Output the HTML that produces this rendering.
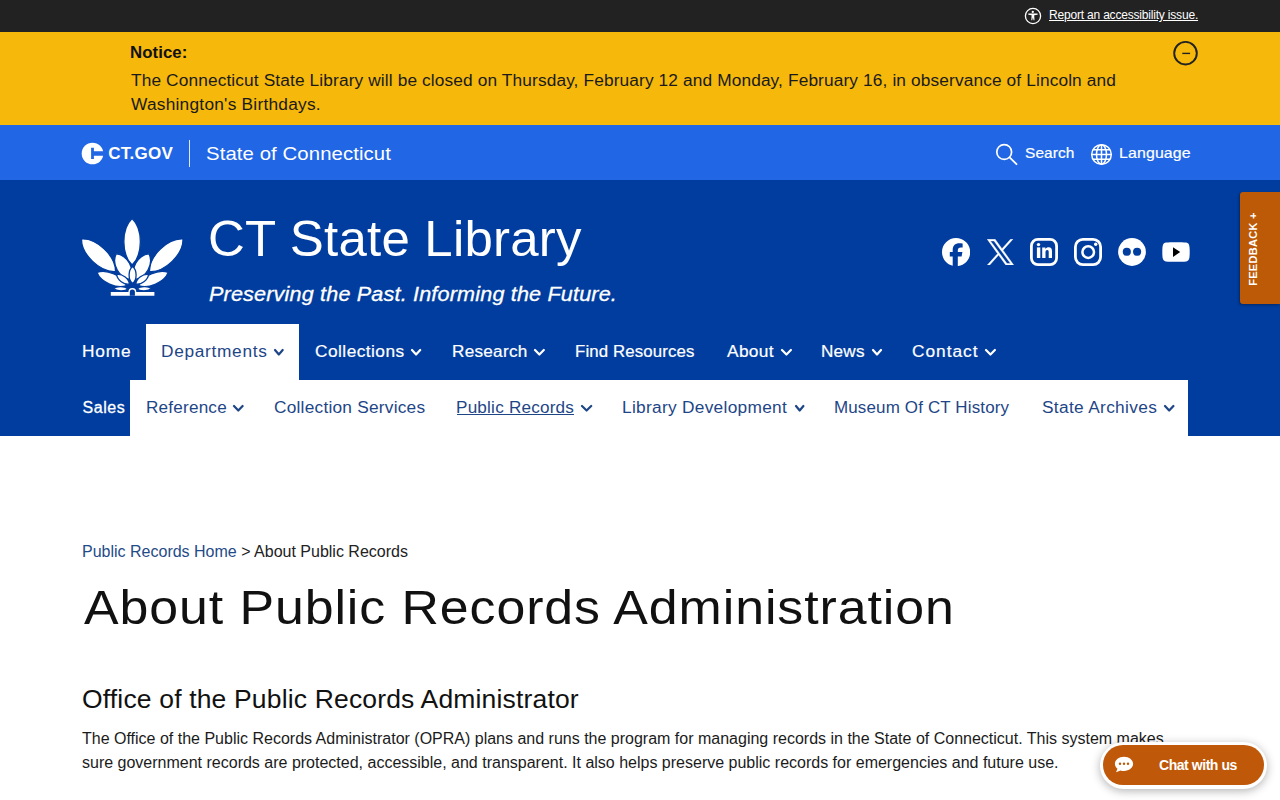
<!DOCTYPE html>
<html><head><meta charset="utf-8">
<style>
html,body{margin:0;padding:0;width:1280px;height:800px;overflow:hidden;background:#fff;}
body{position:relative;font-family:"Liberation Sans",sans-serif;}
.t{position:absolute;white-space:pre;}
.ic{position:absolute;display:block;}
.band{position:absolute;left:0;width:1280px;}
</style></head><body>
<div class="band" style="top:0;height:32px;background:#222222"></div>
<div class="band" style="top:32px;height:93px;background:#f5b80b"></div>
<div class="band" style="top:125px;height:55px;background:#2166e5"></div>
<div class="band" style="top:180px;height:256px;background:#003d9e"></div>

<!-- top bar -->
<svg class="ic" style="left:1024px;top:7px" width="18" height="18" viewBox="0 0 18 18">
 <circle cx="9" cy="9" r="7.6" fill="none" stroke="#fff" stroke-width="1.3"/>
 <circle cx="8.8" cy="4.9" r="1.15" fill="#fff"/>
 <path d="M4.3 6.6 L13.6 6.6 L13.6 7.7 L10.2 8.3 L10.5 13.2 L9.6 13.2 L8.9 10.6 L8.2 13.2 L7.3 13.2 L7.6 8.3 L4.3 7.7Z" fill="#fff"/>
</svg>
<div class="t" style="left:1049px;top:9px;font-size:12px;line-height:12px;letter-spacing:-0.19px;color:#fff;text-decoration:underline;text-underline-offset:1px">Report an accessibility issue.</div>

<!-- notice -->
<div class="t" style="left:129.9px;top:45.0px;font-size:16px;line-height:16px;letter-spacing:0.063px;color:#111;transform:scaleX(1.05);transform-origin:0 0;font-weight:bold;">Notice:</div>
<div class="t" style="left:131.0px;top:73.0px;font-size:16px;line-height:16px;letter-spacing:0.119px;color:#1a1a1a;transform:scaleX(1.08);transform-origin:0 0;">The Connecticut State Library will be closed on Thursday, February 12 and Monday, February 16, in observance of Lincoln and</div>
<div class="t" style="left:131.0px;top:97.0px;font-size:16px;line-height:16px;letter-spacing:0.231px;color:#1a1a1a;transform:scaleX(1.08);transform-origin:0 0;">Washington&#39;s Birthdays.</div>
<svg class="ic" style="left:1172px;top:40px" width="27" height="27" viewBox="0 0 27 27">
 <circle cx="13.5" cy="13.2" r="11.3" fill="none" stroke="#222" stroke-width="1.9"/>
 <path d="M10.3 13.4H18.1" stroke="#222" stroke-width="1.4"/>
</svg>

<!-- ct.gov bar -->
<svg class="ic" style="left:81px;top:142px" width="23" height="23" viewBox="0 0 23 23">
 <circle cx="11.5" cy="11.5" r="10.8" fill="#fff"/>
 <path d="M10.1 5.8H12.9V9.2H23V13.8H12.9V17.1H10.1Z" fill="#2166e5"/>
</svg>
<div class="t" style="left:108.2px;top:145.3px;font-size:17px;line-height:17px;letter-spacing:0.28px;color:#fff;font-weight:bold;">CT.GOV</div>
<div class="ic" style="left:189px;top:140px;width:1px;height:27px;background:rgba(255,255,255,0.85)"></div>
<div class="t" style="left:205.5px;top:144.0px;font-size:19px;line-height:19px;letter-spacing:0.089px;color:#fff;transform:scaleX(1.07);transform-origin:0 0;">State of Connecticut</div>
<svg class="ic" style="left:994px;top:142px" width="25" height="25" viewBox="0 0 25 25">
 <circle cx="10.2" cy="10" r="7.4" fill="none" stroke="#fff" stroke-width="1.7"/>
 <path d="M15.6 15.4L22.5 22.2" stroke="#fff" stroke-width="1.8" stroke-linecap="round"/>
</svg>
<div class="t" style="left:1025.4px;top:145.0px;font-size:15px;line-height:15px;letter-spacing:0.082px;color:#fff;transform:scaleX(1.03);transform-origin:0 0;-webkit-text-stroke:0.2px #fff;">Search</div>
<svg class="ic" style="left:1090px;top:143px" width="23" height="23" viewBox="0 0 23 23">
 <g fill="none" stroke="#fff" stroke-width="1.5">
 <circle cx="11.5" cy="11.5" r="9.8"/>
 <ellipse cx="11.5" cy="11.5" rx="5" ry="9.8"/>
 <path d="M11.5 1.7V21.3M1.7 11.5H21.3M3 6.8H20M3 16.2H20"/>
 </g>
</svg>
<div class="t" style="left:1118.9px;top:145.0px;font-size:15px;line-height:15px;letter-spacing:0.121px;color:#fff;transform:scaleX(1.06);transform-origin:0 0;-webkit-text-stroke:0.2px #fff;">Language</div>

<!-- header -->
<svg class="ic" style="left:80px;top:215px" width="105" height="85" viewBox="0 0 105 85">
 <g fill="#fff" stroke="#003d9e" stroke-width="1.3" stroke-linejoin="round"><path d="M52.10 3.50C41.10 13.73 41.10 39.77 52.10 50.00C63.10 39.77 63.10 13.73 52.10 3.50Z"/><path d="M1.50 24.00C1.15 39.34 20.19 57.54 35.50 56.50C35.85 41.16 16.81 22.96 1.50 24.00Z"/><path d="M103.00 24.00C87.74 23.02 68.98 41.22 69.50 56.50C84.76 57.48 103.52 39.28 103.00 24.00Z"/><path d="M36.20 38.80C31.19 48.99 39.20 63.38 50.50 64.50C55.51 54.31 47.50 39.92 36.20 38.80Z"/><path d="M69.00 38.80C57.70 39.92 49.69 54.31 54.70 64.50C66.00 63.38 74.01 48.99 69.00 38.80Z"/><path d="M17.00 57.50C20.53 67.07 37.05 74.35 46.50 70.50C42.97 60.93 26.45 53.65 17.00 57.50Z"/><path d="M88.20 57.50C78.75 53.65 62.23 60.93 58.70 70.50C68.15 74.35 84.67 67.07 88.20 57.50Z"/><path d="M36.70 59.50C37.10 64.79 44.21 70.11 49.40 69.00C49.00 63.71 41.89 58.39 36.70 59.50Z"/><path d="M68.50 59.50C63.31 58.39 56.20 63.71 55.80 69.00C60.99 70.11 68.10 64.79 68.50 59.50Z"/><path d="M52.60 51.50C47.93 55.24 47.93 64.76 52.60 68.50C57.27 64.76 57.27 55.24 52.60 51.50Z"/><path d="M33.50 73.50C36.59 76.41 44.71 76.69 48.00 74.00C44.91 71.09 36.79 70.81 33.50 73.50Z"/><path d="M71.50 73.50C68.21 70.81 60.09 71.09 57.00 74.00C60.29 76.69 68.41 76.41 71.50 73.50Z"/></g>
 <path d="M30.8 77H48.4A3.95 3.95 0 0 1 56.3 77H74.4V80.8H30.8Z" fill="#fff"/>
 <path d="M49.8 77A2.55 2.55 0 0 1 54.9 77V80.8H49.8Z" fill="#003d9e"/>
</svg>
<div class="t" style="left:207.7px;top:214.0px;font-size:50px;line-height:50px;letter-spacing:0.201px;color:#fff;transform:scaleX(1.02);transform-origin:0 0;">CT State Library</div>
<div class="t" style="left:208.6px;top:283.6px;font-size:20px;line-height:20px;letter-spacing:0.155px;color:#fff;transform:scaleX(1.08);transform-origin:0 0;font-style:italic;-webkit-text-stroke:0.3px #fff;">Preserving the Past. Informing the Future.</div>

<!-- social -->
<svg class="ic" style="left:942px;top:237.9px" width="28.2" height="28.2" viewBox="0 0 512 512"><path fill="#fff" d="M512 256C512 114.6 397.4 0 256 0S0 114.6 0 256C0 376 82.7 476.8 194.2 504.5V334.2H141.4V256h52.8V222.3c0-87.1 39.4-127.5 125-127.5c16.2 0 44.2 3.2 55.7 6.4V172c-6-.6-16.5-1-29.6-1c-42 0-58.2 15.9-58.2 57.2V256h83.6l-14.4 78.2H287V510.1C413.8 494.8 512 386.9 512 256h0z"/></svg>
<svg class="ic" style="left:986.5px;top:238.7px" width="27" height="26.4" viewBox="-10 -10 1220 1247" preserveAspectRatio="none"><path fill="#fff" stroke="#fff" stroke-width="20" d="M714.163 519.284L1160.89 0H1055.03L667.137 450.887L357.328 0H0L468.492 681.821L0 1226.37H105.866L515.491 750.218L842.672 1226.37H1200L714.137 519.284H714.163ZM569.165 687.828L521.697 619.934L144.011 79.6944H306.615L611.412 515.685L658.88 583.579L1055.08 1150.3H892.476L569.165 687.854V687.828Z"/></svg>
<svg class="ic" style="left:1030px;top:238px" width="28" height="28" viewBox="0 0 28 28">
 <rect x="1.4" y="1.4" width="25.2" height="25.2" rx="6.5" fill="none" stroke="#fff" stroke-width="2.8"/>
 <circle cx="8.5" cy="6.6" r="1.7" fill="#fff"/>
 <rect x="6.9" y="9.4" width="3.4" height="10.6" fill="#fff"/>
 <path d="M12.2 9.4H15.4V10.9C16.1 9.8 17.3 9.2 18.7 9.2C21 9.2 22 10.7 22 13.2V20H18.7V13.9C18.7 12.7 18.3 12 17.3 12C16.2 12 15.5 12.8 15.5 14.1V20H12.2Z" fill="#fff"/>
</svg>
<svg class="ic" style="left:1074px;top:238px" width="28" height="28" viewBox="0 0 28 28">
 <rect x="1.4" y="1.4" width="25.2" height="25.2" rx="7.5" fill="none" stroke="#fff" stroke-width="2.8"/>
 <circle cx="14.2" cy="14.1" r="5.8" fill="none" stroke="#fff" stroke-width="2.5"/>
 <circle cx="21.7" cy="6.3" r="1.7" fill="#fff"/>
</svg>
<svg class="ic" style="left:1118px;top:238px" width="28" height="28" viewBox="0 0 28 28">
 <circle cx="14" cy="14" r="13.9" fill="#fff"/>
 <circle cx="8.8" cy="13.8" r="4.05" fill="#003d9e"/>
 <circle cx="19.1" cy="13.8" r="4.05" fill="#003d9e"/>
</svg>
<svg class="ic" style="left:1162px;top:241.8px" width="28" height="20" viewBox="0 0 28 20">
 <path d="M0.3 10C0.3 3 1 1 4 0.6C8 0.1 20 0.1 24 0.6C27 1 27.7 3 27.7 10C27.7 17 27 19 24 19.4C20 19.9 8 19.9 4 19.4C1 19 0.3 17 0.3 10Z" fill="#fff"/>
 <path d="M11 5.3L18.2 10L11 15Z" fill="#000"/>
</svg>

<!-- nav row 1 -->
<div class="ic" style="left:146px;top:324px;width:153px;height:60px;background:#fff"></div>
<div class="t" style="left:81.7px;top:344.2px;font-size:16px;line-height:16px;letter-spacing:0.793px;color:#fff;transform:scaleX(1.08);transform-origin:0 0;-webkit-text-stroke:0.2px #fff;">Home</div>
<div class="t" style="left:161.3px;top:344.2px;font-size:16px;line-height:16px;letter-spacing:0.639px;color:#1e4687;transform:scaleX(1.08);transform-origin:0 0;">Departments</div>
<svg class="ic" style="left:273.4px;top:347.75px" width="11.700000000000045" height="8.5" viewBox="-1 -1 11.700000000000045 8.5"><path d="M1 1L4.850000000000023 5.5L8.700000000000045 1" fill="none" stroke="#1e4687" stroke-width="2.2" stroke-linecap="round" stroke-linejoin="round"/></svg>
<div class="t" style="left:314.5px;top:344.2px;font-size:16px;line-height:16px;letter-spacing:0.43px;color:#fff;transform:scaleX(1.08);transform-origin:0 0;-webkit-text-stroke:0.2px #fff;">Collections</div>
<svg class="ic" style="left:409.9px;top:347.75px" width="12.200000000000045" height="8.5" viewBox="-1 -1 12.200000000000045 8.5"><path d="M1 1L5.100000000000023 5.5L9.200000000000045 1" fill="none" stroke="#fff" stroke-width="2.2" stroke-linecap="round" stroke-linejoin="round"/></svg>
<div class="t" style="left:451.5px;top:344.2px;font-size:16px;line-height:16px;letter-spacing:0.268px;color:#fff;transform:scaleX(1.07);transform-origin:0 0;-webkit-text-stroke:0.2px #fff;">Research</div>
<svg class="ic" style="left:532.8px;top:347.75px" width="12.800000000000068" height="8.5" viewBox="-1 -1 12.800000000000068 8.5"><path d="M1 1L5.400000000000034 5.5L9.800000000000068 1" fill="none" stroke="#fff" stroke-width="2.2" stroke-linecap="round" stroke-linejoin="round"/></svg>
<div class="t" style="left:574.7px;top:344.2px;font-size:16px;line-height:16px;letter-spacing:0.121px;color:#fff;transform:scaleX(1.05);transform-origin:0 0;-webkit-text-stroke:0.2px #fff;">Find Resources</div>
<div class="t" style="left:727.1px;top:344.2px;font-size:16px;line-height:16px;letter-spacing:0.333px;color:#fff;transform:scaleX(1.08);transform-origin:0 0;-webkit-text-stroke:0.2px #fff;">About</div>
<svg class="ic" style="left:779.6px;top:347.75px" width="12.899999999999977" height="8.5" viewBox="-1 -1 12.899999999999977 8.5"><path d="M1 1L5.449999999999989 5.5L9.899999999999977 1" fill="none" stroke="#fff" stroke-width="2.2" stroke-linecap="round" stroke-linejoin="round"/></svg>
<div class="t" style="left:821.2px;top:344.2px;font-size:16px;line-height:16px;letter-spacing:0.209px;color:#fff;transform:scaleX(1.07);transform-origin:0 0;-webkit-text-stroke:0.2px #fff;">News</div>
<svg class="ic" style="left:871px;top:347.75px" width="12" height="8.5" viewBox="-1 -1 12 8.5"><path d="M1 1L5.0 5.5L9 1" fill="none" stroke="#fff" stroke-width="2.2" stroke-linecap="round" stroke-linejoin="round"/></svg>
<div class="t" style="left:912.0px;top:344.2px;font-size:16px;line-height:16px;letter-spacing:0.907px;color:#fff;transform:scaleX(1.08);transform-origin:0 0;-webkit-text-stroke:0.2px #fff;">Contact</div>
<svg class="ic" style="left:983.6px;top:347.75px" width="12.899999999999977" height="8.5" viewBox="-1 -1 12.899999999999977 8.5"><path d="M1 1L5.449999999999989 5.5L9.899999999999977 1" fill="none" stroke="#fff" stroke-width="2.2" stroke-linecap="round" stroke-linejoin="round"/></svg>

<!-- nav row 2 -->
<div class="t" style="left:82.4px;top:400px;font-size:16px;line-height:16px;letter-spacing:0.6px;color:#fff;-webkit-text-stroke:0.3px #fff">Sales &amp; Services</div>
<div class="ic" style="left:130px;top:380px;width:1058px;height:56px;background:#fff"></div>
<div class="t" style="left:145.8px;top:400.0px;font-size:16px;line-height:16px;letter-spacing:0.194px;color:#1e4687;transform:scaleX(1.07);transform-origin:0 0;">Reference</div>
<svg class="ic" style="left:231.8px;top:403.75px" width="12.599999999999994" height="8.5" viewBox="-1 -1 12.599999999999994 8.5"><path d="M1 1L5.299999999999997 5.5L9.599999999999994 1" fill="none" stroke="#1e4687" stroke-width="2.2" stroke-linecap="round" stroke-linejoin="round"/></svg>
<div class="t" style="left:273.5px;top:400.0px;font-size:16px;line-height:16px;letter-spacing:0.211px;color:#1e4687;transform:scaleX(1.08);transform-origin:0 0;">Collection Services</div>
<div class="t" style="left:456.3px;top:400.0px;font-size:16px;line-height:16px;letter-spacing:0.2px;color:#1e4687;transform:scaleX(1.07);transform-origin:0 0;">Public Records</div>
<div class="ic" style="left:457px;top:413.5px;width:117px;height:1.2px;background:#1e4687"></div>
<svg class="ic" style="left:579.6px;top:403.75px" width="13.199999999999932" height="8.5" viewBox="-1 -1 13.199999999999932 8.5"><path d="M1 1L5.599999999999966 5.5L10.199999999999932 1" fill="none" stroke="#1e4687" stroke-width="2.2" stroke-linecap="round" stroke-linejoin="round"/></svg>
<div class="t" style="left:621.8px;top:400.0px;font-size:16px;line-height:16px;letter-spacing:0.275px;color:#1e4687;transform:scaleX(1.08);transform-origin:0 0;">Library Development</div>
<svg class="ic" style="left:793.8px;top:403.75px" width="11.400000000000091" height="8.5" viewBox="-1 -1 11.400000000000091 8.5"><path d="M1 1L4.7000000000000455 5.5L8.400000000000091 1" fill="none" stroke="#1e4687" stroke-width="2.2" stroke-linecap="round" stroke-linejoin="round"/></svg>
<div class="t" style="left:834.3px;top:400.0px;font-size:16px;line-height:16px;letter-spacing:0.143px;color:#1e4687;transform:scaleX(1.06);transform-origin:0 0;">Museum Of CT History</div>
<div class="t" style="left:1041.6px;top:400.0px;font-size:16px;line-height:16px;letter-spacing:0.308px;color:#1e4687;transform:scaleX(1.08);transform-origin:0 0;">State Archives</div>
<svg class="ic" style="left:1162.5px;top:403.75px" width="12.400000000000091" height="8.5" viewBox="-1 -1 12.400000000000091 8.5"><path d="M1 1L5.2000000000000455 5.5L9.400000000000091 1" fill="none" stroke="#1e4687" stroke-width="2.2" stroke-linecap="round" stroke-linejoin="round"/></svg>

<!-- feedback -->
<div class="ic" style="left:1240px;top:192px;width:40px;height:112px;background:#bc5a07;border-radius:3px 0 0 3px;box-shadow:-1px 1px 3px rgba(0,0,0,0.35)"></div>
<div class="t" style="left:1253.3px;top:248.5px;font-size:11px;line-height:11px;font-weight:bold;color:#fff;letter-spacing:0.3px;transform:translate(-50%,-50%) rotate(-90deg);transform-origin:center">FEEDBACK +</div>

<!-- content -->
<div class="t" style="left:82px;top:544px;font-size:16px;line-height:16px"><span style="color:#1f4b88">Public Records Home</span><span style="color:#222"> &gt; About Public Records</span></div>
<div class="t" style="left:84.0px;top:583.7px;font-size:48px;line-height:48px;letter-spacing:0.852px;color:#111;transform:scaleX(1.08);transform-origin:0 0;">About Public Records Administration</div>
<div class="t" style="left:81.6px;top:687.0px;font-size:25px;line-height:25px;letter-spacing:0.153px;color:#111;transform:scaleX(1.06);transform-origin:0 0;">Office of the Public Records Administrator</div>
<div class="t" style="left:82px;top:727px;font-size:16px;line-height:24px;color:#1b1b1b">The Office of the Public Records Administrator (OPRA) plans and runs the program for managing records in the State of Connecticut. This system makes
sure government records are protected, accessible, and transparent. It also helps preserve public records for emergencies and future use.</div>

<!-- chat -->
<div class="ic" style="left:1100.4px;top:741.9px;width:167px;height:46.7px;border-radius:24px;background:#fff;box-shadow:0 2px 10px rgba(0,0,0,0.3)"></div>
<div class="ic" style="left:1103.4px;top:744.8px;width:161px;height:40.1px;border-radius:21px;background:#bf5808"></div>
<svg class="ic" style="left:1114px;top:756px" width="20" height="17" viewBox="0 0 20 17">
 <path d="M10 0.7C4.9 0.7 0.9 3.9 0.9 7.8C0.9 9.8 1.9 11.5 3.5 12.8L2 16.3L6.6 14.4C7.7 14.8 8.8 14.9 10 14.9C15.1 14.9 19.1 11.7 19.1 7.8C19.1 3.9 15.1 0.7 10 0.7Z" fill="#fff"/>
 <circle cx="6" cy="7.8" r="1.2" fill="#bf5808"/><circle cx="10" cy="7.8" r="1.2" fill="#bf5808"/><circle cx="14" cy="7.8" r="1.2" fill="#bf5808"/>
</svg>
<div class="t" style="left:1159px;top:758px;font-size:14px;line-height:14px;font-weight:bold;color:#fff;letter-spacing:-0.45px">Chat with us</div>

</body></html>
